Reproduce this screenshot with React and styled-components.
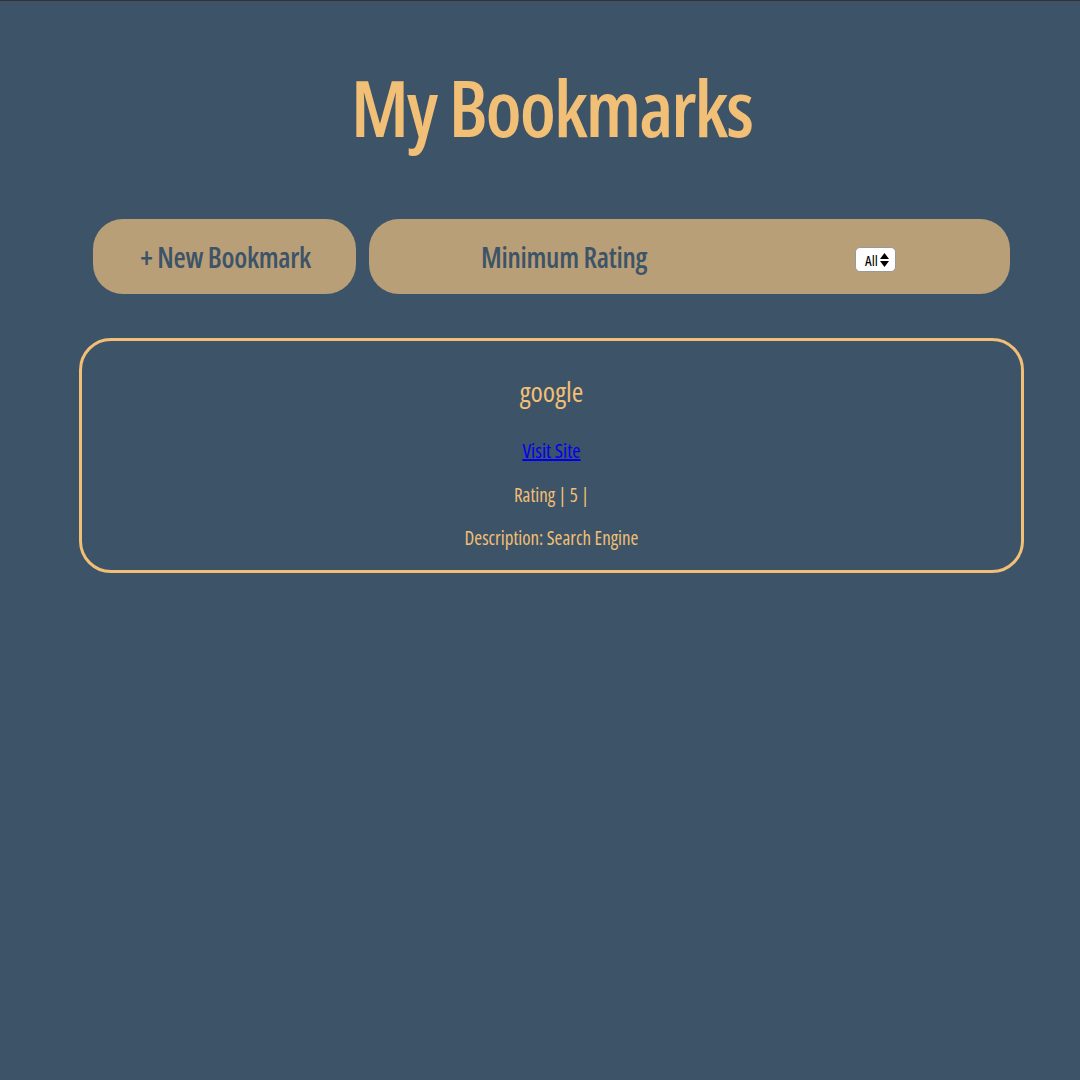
import React from "react";
import styled, { createGlobalStyle } from "styled-components";

const Global = createGlobalStyle`
  html, body { margin: 0; padding: 0; background: #3d5368; }
  body {
    font-family: "Open Sans", "Roboto", sans-serif;
    font-stretch: 75%;
    border-top: 1px solid #333;
    min-height: 1079px;
  }
`;

const Page = styled.div`
  padding: 0 56px 0 79px;
  display: flex;
  flex-direction: column;
  align-items: stretch;
`;

const Title = styled.h1`
  margin: 60px 0 0;
  text-align: center;
  color: #f1bf75;
  font-size: 78px;
  font-weight: 600;
  letter-spacing: -2px;
  line-height: 92px;
`;

const Toolbar = styled.div`
  display: flex;
  gap: 13px;
  margin: 66px 14px 0;
`;

const Pill = styled.div`
  background: #b89f77;
  height: 75px;
  border-radius: 30px;
  display: flex;
  align-items: center;
  color: #3d5368;
  font-size: 28px;
  font-weight: 600;
  letter-spacing: -0.3px;
`;

const NewButton = styled(Pill)`
  width: 263px;
  justify-content: center;
  cursor: pointer;
  padding-left: 2px;
  box-sizing: border-box;
`;

const Filter = styled(Pill)`
  flex: 1;
  padding-left: 112px;
`;

const FilterLabel = styled.span`
  width: 374px;
`;

const SelectBox = styled.div`
  position: relative;
  width: 41px;
  height: 25px;
  background: #fff;
  border: 1px solid #999;
  border-radius: 5px;
  box-sizing: border-box;
  display: flex;
  align-items: center;
  color: #000;
  font-size: 15px;
  font-weight: 400;
  padding-left: 9px;
  margin-top: 6px;
  letter-spacing: 0;
`;

const Arrows = styled.svg`
  position: absolute;
  right: 6px;
  top: 5px;
`;

const Card = styled.section`
  margin-top: 44px;
  border: 3px solid #f1bf75;
  border-radius: 32px;
  height: 235px;
  box-sizing: border-box;
  display: flex;
  flex-direction: column;
  align-items: center;
  color: #f1bf75;
`;

const CardTitle = styled.h2`
  margin: 34px 0 0;
  font-size: 28px;
  font-weight: 500;
  line-height: 32px;
`;

const Link = styled.a`
  margin-top: 32px;
  color: #0000ee;
  font-size: 20px;
  line-height: 24px;
`;

const Line = styled.p`
  margin: ${(p) => p.$top}px 0 0;
  font-size: 19px;
  line-height: 24px;
`;

export default function App() {
  return (
    <>
      <Global />
      <Page>
        <Title>My Bookmarks</Title>
        <Toolbar>
          <NewButton>+ New Bookmark</NewButton>
          <Filter>
            <FilterLabel>Minimum Rating</FilterLabel>
            <SelectBox>
              All
              <Arrows width="9" height="14" viewBox="0 0 9 14">
                <path d="M4.5 0 L9 6 L0 6 Z" fill="#000" />
                <path d="M4.5 14 L9 8 L0 8 Z" fill="#000" />
              </Arrows>
            </SelectBox>
          </Filter>
        </Toolbar>
        <Card>
          <CardTitle>google</CardTitle>
          <Link href="#">Visit Site</Link>
          <Line $top={20}>Rating | 5 |</Line>
          <Line $top={19}>Description: Search Engine</Line>
        </Card>
      </Page>
    </>
  );
}
